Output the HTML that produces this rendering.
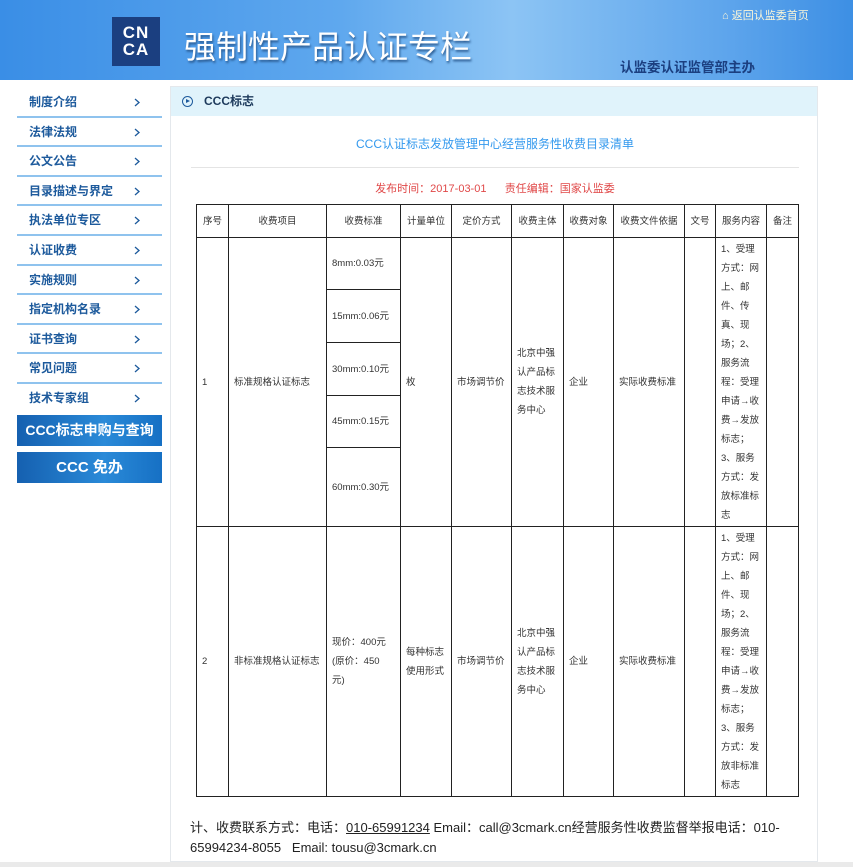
<!DOCTYPE html>
<html><head><meta charset="utf-8"><style>
*{margin:0;padding:0;box-sizing:border-box}
body{width:853px;height:867px;background:#fff;font-family:"Liberation Sans","Noto Sans CJK SC",sans-serif;position:relative;overflow:hidden}
.banner{position:absolute;left:0;top:0;width:853px;height:80px;background:linear-gradient(90deg,#3a8ee6 0%,#5fa8ee 40%,#8cc4f4 60%,#5ea5ec 85%,#3d8fe4 100%)}
.logo{position:absolute;left:112px;top:17px;width:48px;height:49px;background:#1b3f80;color:#fff;font:bold 17px/17px "Liberation Sans",sans-serif;text-align:center;padding-top:7px;letter-spacing:1px}
.title{position:absolute;left:184px;top:22px;color:#fff;font-size:32px;letter-spacing:0;text-shadow:1px 2px 2px #2a5a90;font-family:"Noto Sans CJK SC",sans-serif}
.sub{position:absolute;left:620px;top:56px;color:#1b3f80;font-size:13.5px;font-weight:bold}
.back{position:absolute;left:722px;top:7px;color:#fbf6d8;font-size:11px}
.side{position:absolute;left:17px;top:88px;width:145px}
.side div{height:29.6px;border-bottom:2px solid #8fc3ee;color:#1d5a9c;font-size:12px;font-weight:bold;padding-left:12px;line-height:28px;position:relative}
.side div svg{position:absolute;left:117px;top:10px}
.bn{position:absolute;left:17px;width:145px;height:31px;background:linear-gradient(90deg,#1560b0,#2a8ad8 60%,#1670c4);color:#fff;font-weight:bold;text-align:center;line-height:31px}
.panel{position:absolute;left:170px;top:86px;width:648px;height:776px;background:#fff;border:1px solid #e4e8ec}
.ph{height:29px;background:#e0f3fb;font-size:12px;font-weight:bold;color:#1d3a5c;line-height:29px;padding-left:33px;position:relative}
.ph i{position:absolute;left:11px;top:9px;width:11px;height:11px;border:1.5px solid #1d5a9c;border-radius:50%}
.ph i:after{content:"";position:absolute;left:3px;top:2px;border-left:4px solid #1d5a9c;border-top:2.5px solid transparent;border-bottom:2.5px solid transparent}
.t1{position:absolute;left:0;width:648px;top:48px;text-align:center;color:#3399ee;font-size:12px}
.hr{position:absolute;left:20px;top:80px;width:608px;border-top:1px solid #e4e4e4}
.dt{position:absolute;left:0;width:648px;top:93px;text-align:center;color:#e04848;font-size:11px}
table{position:absolute;left:196px;top:204px;border-collapse:collapse;table-layout:fixed;font-size:9.5px;color:#333}
td{border:1px solid #222;padding:0 5px;vertical-align:middle;line-height:19px;white-space:nowrap;overflow:hidden}
.c{text-align:center;padding:0}
.foot{position:absolute;left:190px;top:818px;width:610px;font-size:13px;line-height:20px;color:#222}
.gb{position:absolute;left:0;top:862px;width:853px;height:5px;background:#eaeaea}
</style></head><body>
<div class="banner"></div>
<div class="logo">CN<br>CA</div>
<div class="title">强制性产品认证专栏</div>
<div class="back">⌂ 返回认监委首页</div>
<div class="sub">认监委认证监管部主办</div>
<div class="side">
<div>制度介绍<svg width="6" height="9"><path d="M1 1l4 3.5L1 8" fill="none" stroke="#1d5a9c" stroke-width="1.3"/></svg></div><div>法律法规<svg width="6" height="9"><path d="M1 1l4 3.5L1 8" fill="none" stroke="#1d5a9c" stroke-width="1.3"/></svg></div><div>公文公告<svg width="6" height="9"><path d="M1 1l4 3.5L1 8" fill="none" stroke="#1d5a9c" stroke-width="1.3"/></svg></div><div>目录描述与界定<svg width="6" height="9"><path d="M1 1l4 3.5L1 8" fill="none" stroke="#1d5a9c" stroke-width="1.3"/></svg></div><div>执法单位专区<svg width="6" height="9"><path d="M1 1l4 3.5L1 8" fill="none" stroke="#1d5a9c" stroke-width="1.3"/></svg></div><div>认证收费<svg width="6" height="9"><path d="M1 1l4 3.5L1 8" fill="none" stroke="#1d5a9c" stroke-width="1.3"/></svg></div><div>实施规则<svg width="6" height="9"><path d="M1 1l4 3.5L1 8" fill="none" stroke="#1d5a9c" stroke-width="1.3"/></svg></div><div>指定机构名录<svg width="6" height="9"><path d="M1 1l4 3.5L1 8" fill="none" stroke="#1d5a9c" stroke-width="1.3"/></svg></div><div>证书查询<svg width="6" height="9"><path d="M1 1l4 3.5L1 8" fill="none" stroke="#1d5a9c" stroke-width="1.3"/></svg></div><div>常见问题<svg width="6" height="9"><path d="M1 1l4 3.5L1 8" fill="none" stroke="#1d5a9c" stroke-width="1.3"/></svg></div><div style="border:none">技术专家组<svg width="6" height="9"><path d="M1 1l4 3.5L1 8" fill="none" stroke="#1d5a9c" stroke-width="1.3"/></svg></div>
</div>
<div class="bn" style="top:415px;font-size:14px">CCC标志申购与查询</div>
<div class="bn" style="top:452px;font-size:15px">CCC 免办</div>
<div class="panel">
<div class="ph"><i></i>CCC标志</div>
<div class="t1">CCC认证标志发放管理中心经营服务性收费目录清单</div>
<div class="hr"></div>
<div class="dt">发布时间：2017-03-01 &nbsp; &nbsp; &nbsp;责任编辑：国家认监委</div>
</div>
<table>
<colgroup><col style="width:32px"><col style="width:98px"><col style="width:74px"><col style="width:51px"><col style="width:60px"><col style="width:52px"><col style="width:50px"><col style="width:71px"><col style="width:31px"><col style="width:51px"><col style="width:32px"></colgroup>
<tr style="height:33px"><td class="c">序号</td><td class="c">收费项目</td><td class="c">收费标准</td><td class="c">计量单位</td><td class="c">定价方式</td><td class="c">收费主体</td><td class="c">收费对象</td><td class="c">收费文件依据</td><td class="c">文号</td><td class="c">服务内容</td><td class="c">备注</td></tr>
<tr style="height:52px"><td rowspan="5">1</td><td rowspan="5">标准规格认证标志</td><td>8mm:0.03元</td><td rowspan="5">枚</td><td rowspan="5">市场调节价</td><td rowspan="5">北京中强<br>认产品标<br>志技术服<br>务中心</td><td rowspan="5">企业</td><td rowspan="5">实际收费标准</td><td rowspan="5"></td><td rowspan="5">1、受理<br>方式：网<br>上、邮<br>件、传<br>真、现<br>场；2、<br>服务流<br>程：受理<br>申请→收<br>费→发放<br>标志；<br>3、服务<br>方式：发<br>放标准标<br>志</td><td rowspan="5"></td></tr>
<tr style="height:53px"><td>15mm:0.06元</td></tr>
<tr style="height:53px"><td>30mm:0.10元</td></tr>
<tr style="height:52px"><td>45mm:0.15元</td></tr>
<tr style="height:79px"><td>60mm:0.30元</td></tr>
<tr style="height:270px"><td>2</td><td>非标准规格认证标志</td><td>现价：400元<br>(原价：450<br>元)</td><td>每种标志<br>使用形式</td><td>市场调节价</td><td>北京中强<br>认产品标<br>志技术服<br>务中心</td><td>企业</td><td>实际收费标准</td><td></td><td>1、受理<br>方式：网<br>上、邮<br>件、现<br>场；2、<br>服务流<br>程：受理<br>申请→收<br>费→发放<br>标志；<br>3、服务<br>方式：发<br>放非标准<br>标志</td><td></td></tr>
</table>
<div class="foot">计、收费联系方式：电话：<u>010-65991234</u> Email：call@3cmark.cn经营服务性收费监督举报电话：010-65994234-8055 &nbsp; Email: tousu@3cmark.cn</div>
<div class="gb"></div>
</body></html>
